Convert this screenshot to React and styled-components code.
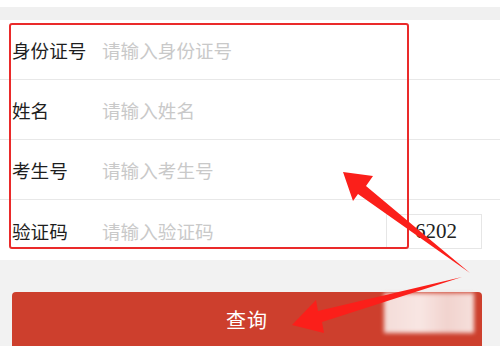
import React from 'react';
import styled, { createGlobalStyle } from 'styled-components';

const GlobalStyle = createGlobalStyle`
  html, body {
    margin: 0;
    padding: 0;
    background: #f2f2f2;
  }
  body {
    font-family: "Noto Sans CJK SC", "Noto Sans", sans-serif;
  }
`;

const fields = [
  { label: '身份证号', placeholder: '请输入身份证号' },
  { label: '姓名', placeholder: '请输入姓名' },
  { label: '考生号', placeholder: '请输入考生号' },
  { label: '验证码', placeholder: '请输入验证码', captcha: '6202' },
];

const Page = () => (
  <Wrapper>
    <TopStrip />
    <Gap />
    <Form>
      {fields.map(f => (
        <Row key={f.label}>
          <Label>{f.label}</Label>
          <Input placeholder={f.placeholder} />
          {f.captcha && <Captcha>{f.captcha}</Captcha>}
        </Row>
      ))}
    </Form>
    <Footer>
      <SubmitButton>查询</SubmitButton>
    </Footer>
    <Mosaic />
    <Annotations viewBox="0 0 500 346">
      <rect x="10" y="24" width="398" height="224" rx="2" fill="none" stroke="#ea2a2a" strokeWidth="2" />
      <polygon
        fill="#fb1f1a"
        points="343,172 373,176 366,186 470,273 358,194 353,201"
      />
      <polygon
        fill="#fb1f1a"
        points="292,325 316,300 318,311 462,277 322,322 324,333"
      />
    </Annotations>
  </Wrapper>
);

const Wrapper = styled.div`
  position: relative;
  width: 500px;
  height: 346px;
  overflow: hidden;
  background: #f2f2f2;
`;

const TopStrip = styled.div`
  height: 7px;
  background: #ffffff;
`;

const Gap = styled.div`
  height: 13px;
  background: #f0f0f0;
`;

const Form = styled.div`
  background: #ffffff;
  display: flex;
  flex-direction: column;
`;

const Row = styled.div`
  height: 59px;
  display: flex;
  align-items: center;
  border-bottom: 1px solid #e8e8e8;
  padding: 0 18px 0 12px;
  &:last-child {
    border-bottom: none;
    height: 60px;
  }
`;

const Label = styled.div`
  width: 90px;
  flex-shrink: 0;
  font-size: 18.6px;
  color: #1e1e1e;
`;

const Input = styled.input`
  flex: 1;
  min-width: 0;
  border: none;
  outline: none;
  background: transparent;
  font-family: "Noto Sans CJK SC", "Noto Sans", sans-serif;
  font-size: 18.6px;
  color: #333;
  padding: 0;
  &::placeholder {
    color: #c9c9c9;
  }
`;

const Captcha = styled.div`
  width: 96px;
  height: 35px;
  box-sizing: border-box;
  border: 1px solid #e6e6e6;
  display: flex;
  align-items: center;
  padding-left: 28px;
  font-family: "Liberation Serif", serif;
  font-size: 21px;
  color: #222;
  margin-top: 2px;
`;

const Footer = styled.div`
  padding: 32px 18px 0 12px;
`;

const SubmitButton = styled.button`
  width: 100%;
  height: 60px;
  border: none;
  border-radius: 4px;
  background: #cd3f2d;
  color: #ffffff;
  font-family: "Noto Sans CJK SC", "Noto Sans", sans-serif;
  font-size: 20px;
  padding-bottom: 6px;
  letter-spacing: 1px;
`;

const Mosaic = styled.div`
  position: absolute;
  left: 384px;
  top: 293px;
  width: 90px;
  height: 40px;
  background: linear-gradient(90deg, #f4dcd8 0%, #f8e6e3 40%, #f1d3ce 70%, #f6e0dc 100%);
  filter: blur(2px);
`;

const Annotations = styled.svg`
  position: absolute;
  left: 0;
  top: 0;
  width: 500px;
  height: 346px;
  pointer-events: none;
`;

export default function App() {
  return (
    <>
      <GlobalStyle />
      <Page />
    </>
  );
}
